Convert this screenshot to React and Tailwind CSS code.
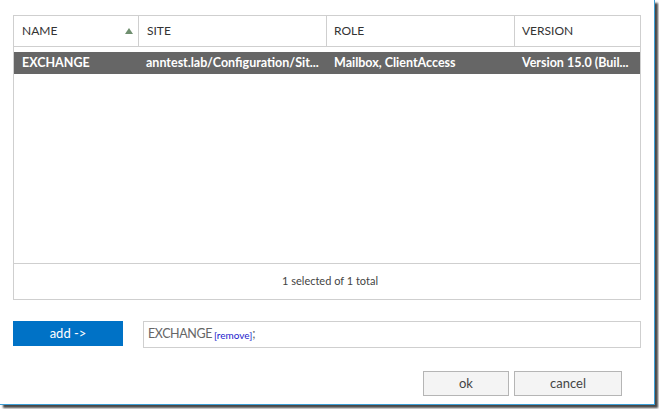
export default function App() {
  const font = { fontFamily: '"Segoe UI", Lato, "Open Sans", sans-serif' };
  return (
    <div className="w-[659px] h-[409px] bg-white overflow-hidden" style={font}>
      <div className="w-[655px] h-[405px] bg-white border-r border-b border-[#3d9fd6] shadow-[3px_3px_2px_rgba(40,40,40,0.85)] flex flex-col">
        {/* table */}
        <div className="ml-[13px] mt-[15px] w-[628px] h-[285px] border border-[#cfcfcf] flex flex-col">
          <div className="flex h-[31px] border-b border-[#cfcfcf] text-[12px] text-[#333]">
            <div className="w-[125px] border-r border-[#cfcfcf] flex items-center pl-[8px] pr-[5px]">
              <span className="flex-1">NAME</span>
              <svg width="8" height="6" viewBox="0 0 8 6">
                <polygon points="4,0 8,6 0,6" fill="#6f8f6f" />
              </svg>
            </div>
            <div className="w-[188px] border-r border-[#cfcfcf] flex items-center pl-[8px]">SITE</div>
            <div className="w-[188px] border-r border-[#cfcfcf] flex items-center pl-[7px]">ROLE</div>
            <div className="flex-1 flex items-center pl-[7px]">VERSION</div>
          </div>
          <div className="mt-[5px] flex h-[22px] bg-[#666666] text-white font-bold text-[12.5px] items-center whitespace-nowrap">
            <div className="w-[125px] pl-[8px]">EXCHANGE</div>
            <div className="w-[188px] pl-[7px] overflow-hidden">anntest.lab/Configuration/Sit...</div>
            <div className="w-[188px] pl-[7px] overflow-hidden">Mailbox, ClientAccess</div>
            <div className="flex-1 pl-[7px] overflow-hidden">Version 15.0 (Buil...</div>
          </div>
          <div className="flex-1" />
          <div className="h-[36px] border-t border-[#cfcfcf] flex items-center justify-center text-[11px] text-[#444] pl-[6px]">
            1 selected of 1 total
          </div>
        </div>
        {/* add row */}
        <div className="mt-[21px] ml-[13px] flex items-start">
          <div className="w-[110px] h-[25px] bg-[#0072c6] text-white text-[13px] flex items-center justify-center">
            add -&gt;
          </div>
          <div className="ml-[20px] w-[498px] h-[27px] border border-[#cfcfcf] flex items-center pl-[4px] text-[12.5px] text-[#666] tracking-[-0.4px]">
            <span>EXCHANGE</span>
            <span className="text-[10px] text-[#1a1acc] ml-[2px] mt-[2px] tracking-normal">[remove]</span>
            <span>;</span>
          </div>
        </div>
        {/* buttons */}
        <div className="mt-[23px] ml-[423px] flex gap-[5px]">
          <div className="w-[86px] h-[25px] border border-[#b5b5b5] bg-[#f4f4f4] text-[13px] text-[#444] flex items-center justify-center">ok</div>
          <div className="w-[108px] h-[25px] border border-[#b5b5b5] bg-[#f4f4f4] text-[13px] text-[#444] flex items-center justify-center">cancel</div>
        </div>
      </div>
    </div>
  );
}
